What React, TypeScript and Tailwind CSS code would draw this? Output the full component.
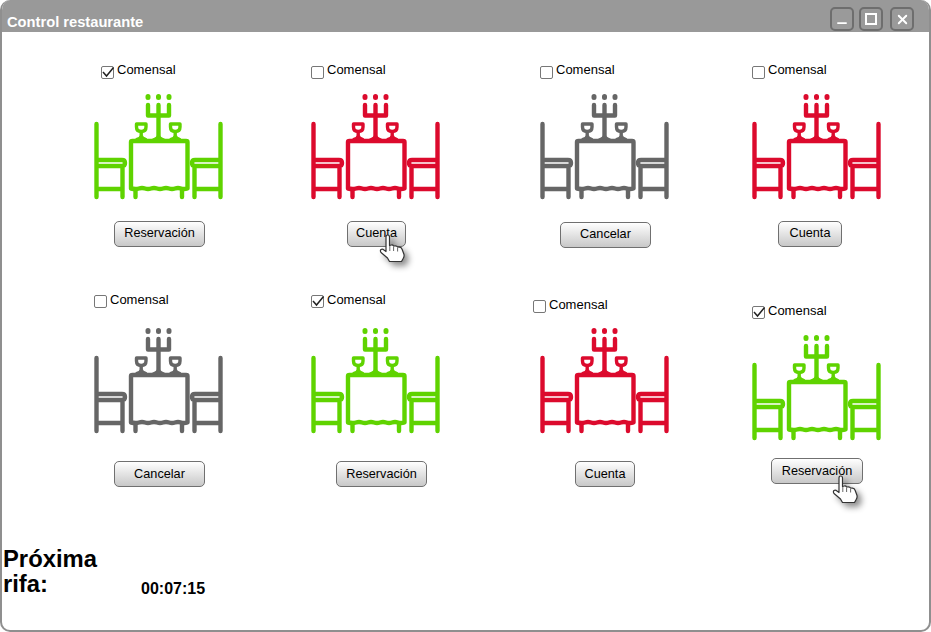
import { Minus, X } from "lucide-react";

type Mesa = {
  color: string;
  checked: boolean;
  checkClass: string;
  iconClass: string;
  buttonClass: string;
  label: string;
  handClass?: string;
};

const GREEN = "#5fd300";
const RED = "#dc0a2d";
const GRAY = "#666666";

const rowOne: Mesa[] = [
  { color: GREEN, checked: true, checkClass: "ml-[7px]", iconClass: "mt-[14px]", buttonClass: "mt-[20px] ml-[20px] w-[91px]", label: "Reservación" },
  { color: RED, checked: false, checkClass: "", iconClass: "mt-[14px]", buttonClass: "mt-[20px] ml-[36px] w-[59px]", label: "Cuenta", handClass: "left-[32px] top-[14px]" },
  { color: GRAY, checked: false, checkClass: "", iconClass: "mt-[14px]", buttonClass: "mt-[21px] ml-[20px] w-[91px]", label: "Cancelar" },
  { color: RED, checked: false, checkClass: "", iconClass: "mt-[14px]", buttonClass: "mt-[20px] ml-[26px] w-[64px]", label: "Cuenta" },
];

const rowTwo: Mesa[] = [
  { color: GRAY, checked: false, checkClass: "", iconClass: "mt-[18px]", buttonClass: "mt-[27px] ml-[20px] w-[91px]", label: "Cancelar" },
  { color: GREEN, checked: true, checkClass: "", iconClass: "mt-[18px]", buttonClass: "mt-[27px] ml-[25px] w-[91px]", label: "Reservación" },
  { color: RED, checked: false, checkClass: "mt-[5px] -ml-[7px]", iconClass: "mt-[13px]", buttonClass: "mt-[27px] ml-[35px] w-[60px]", label: "Cuenta" },
  { color: GREEN, checked: true, checkClass: "mt-[11px]", iconClass: "mt-[14px]", buttonClass: "mt-[17px] ml-[19px] w-[92px]", label: "Reservación", handClass: "left-[61px] top-[17px]" },
];

function TableIcon({ color }: { color: string }) {
  return (
    <svg width="129" height="106" viewBox="0 0 129 106" fill="none" stroke={color} strokeWidth="4.4" strokeLinecap="round" strokeLinejoin="round" className="block">
      {/* sillas */}
      <path d="M2.5 30V103M2.5 66H28Q31 66 31 69Q31 72 28 72H2.5M28.5 72V103M2.5 95H28.5" />
      <path d="M126.5 30V103M126.5 66H101Q98 66 98 69Q98 72 101 72H126.5M100.5 72V103M126.5 95H100.5" />
      {/* mesa */}
      <path d="M37 48Q37 47 38.5 47H92Q93.5 47 93.5 48V94.5Q90 95.5 87 94.5T81 94.5T75 94.5T69 94.5T63 94.5T57 94.5T51 94.5T45 94.5T37 94.5Z" />
      <path d="M41.5 96V103M88 96V103" />
      {/* candelabro */}
      <path d="M64.5 11V45M54 11V21.5H75V11" />
      <path d="M59.5 45.5Q64 44.5 64.5 41Q65 44.5 69.5 45.5" strokeWidth="2.8" />
      <path d="M54 2.5V3.5M64.5 2.5V3.5M75 2.5V3.5" strokeWidth="5" />
      {/* copas */}
      <path d="M42.5 30H52V33Q52 37.5 47.2 37.5Q42.5 37.5 42.5 33ZM47.2 37.5V41.5M43 45.5Q47 44.5 47.2 41.5Q47.5 44.5 51.5 45.5" strokeWidth="3.4" />
      <path d="M76.5 30H86V33Q86 37.5 81.2 37.5Q76.5 37.5 76.5 33ZM81.2 37.5V41.5M77 45.5Q81 44.5 81.2 41.5Q81.5 44.5 85.5 45.5" strokeWidth="3.4" />
    </svg>
  );
}

function HandCursor({ className }: { className: string }) {
  return (
    <svg width="32" height="36" viewBox="0 0 32 36" className={`absolute ${className} drop-shadow-[4px_4px_3px_rgba(0,0,0,0.45)]`}>
      <path
        d="M7 3Q7 1 8.8 1Q10.5 1 10.5 3V11.5L12.5 11Q14 10.8 14.6 12L16.5 11.8Q18 11.8 18.6 13L20.5 13.2Q22.5 13.5 23.2 15.5L25 20.5Q25.4 22.5 24.2 24.5L22.5 27.5H10.5L8.5 24L2 18.5Q0.8 16.6 2 15.5Q3.4 14.6 5 16L7 17.5Z"
        fill="#ffffff"
        stroke="#333333"
        strokeWidth="1.2"
        strokeLinejoin="round"
      />
      <path d="M10.8 12V17M14.6 12.5V17M18.6 13.5V17.5" fill="none" stroke="#555555" strokeWidth="0.9" />
    </svg>
  );
}

function MesaCard({ mesa }: { mesa: Mesa }) {
  return (
    <div className="flex flex-col items-start">
      <label className={`flex h-5 items-center ${mesa.checkClass}`}>
        <span className="relative h-[13px] w-[13px] shrink-0 translate-y-[2px] rounded-[2px] border border-[#777777] bg-white">
          {mesa.checked && (
            <svg width="14" height="12" viewBox="0 0 14 12" className="absolute -left-[1px] -top-[1px]">
              <path d="M2 6L5.5 10L12.5 1.5" fill="none" stroke="#222222" strokeWidth="1.5" />
            </svg>
          )}
        </span>
        <span className="ml-[3px] text-[13px] text-black">Comensal</span>
      </label>
      <div className={mesa.iconClass}>
        <TableIcon color={mesa.color} />
      </div>
      <div className={`relative ${mesa.buttonClass}`}>
        <button className="h-[26px] w-full rounded-[5px] border border-[#707070] bg-gradient-to-b from-white to-[#c8c8c8] text-[12.7px] text-black">
          {mesa.label}
        </button>
        {mesa.handClass && <HandCursor className={mesa.handClass} />}
      </div>
    </div>
  );
}

function WindowButton({ children }: { children: React.ReactNode }) {
  return (
    <div className="flex h-6 w-6 items-center justify-center rounded-[5px] border-2 border-[#6e6e6e] bg-[#9a9a9a] text-white">
      {children}
    </div>
  );
}

function MesaRow({ mesas, className }: { mesas: Mesa[]; className: string }) {
  return (
    <div className={`grid grid-cols-[217px_229px_212px_1fr] ${className}`}>
      {mesas.map((mesa, index) => (
        <MesaCard key={index} mesa={mesa} />
      ))}
    </div>
  );
}

export default function App() {
  return (
    <div className="h-[632px] w-[931px] overflow-hidden bg-white font-['Liberation_Sans',Arial,sans-serif]">
      <div className="flex h-full flex-col overflow-hidden rounded-[10px] border-x-2 border-b-2 border-[#8f8f8f]">
        <header className="-mx-[2px] flex h-8 shrink-0 items-center justify-between bg-[#999999] pl-[7px] pr-[17px]">
          <h1 className="translate-y-[6px] text-[14.7px] font-bold text-white">Control restaurante</h1>
          <div className="flex translate-y-[3px] gap-[5px]">
            <WindowButton>
              <Minus size={14} strokeWidth={3} className="translate-y-[4px]" />
            </WindowButton>
            <WindowButton>
              <span className="h-[12px] w-[12px] border-2 border-white" />
            </WindowButton>
            <div className="ml-[2px]">
              <WindowButton>
                <X size={15} strokeWidth={3} />
              </WindowButton>
            </div>
          </div>
        </header>
        <main className="flex-1 pl-[92px]">
          <MesaRow mesas={rowOne} className="pt-[28px]" />
          <MesaRow mesas={rowTwo} className="pt-[42px]" />
          <footer className="-ml-[91px] mt-[59px] flex items-start">
            <h2 className="w-[138px] text-[23.8px] leading-[25px] font-bold text-black">Próxima rifa:</h2>
            <span className="mt-[31px] text-[16px] font-bold text-black">00:07:15</span>
          </footer>
        </main>
      </div>
    </div>
  );
}
